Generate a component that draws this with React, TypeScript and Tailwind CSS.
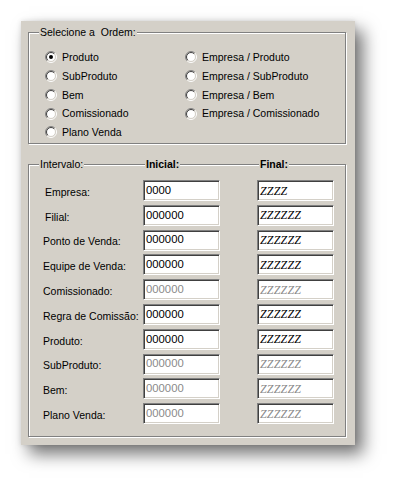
import React from "react";

const FONT = { fontFamily: '"Liberation Sans", Arial, sans-serif' };

function Radio({ checked }: { checked?: boolean }) {
  const c = 6;
  const p = (r: number) => {
    const d = r * 0.7071;
    return { x1: c - d, y1: c + d, x2: c + d, y2: c - d };
  };
  const o = p(5.5);
  const i = p(4.5);
  return (
    <svg width="12" height="12" viewBox="0 0 12 12" className="shrink-0">
      <circle cx="6" cy="6" r="4.5" fill="#fff" />
      <path d={`M ${o.x1} ${o.y1} A 5.5 5.5 0 0 1 ${o.x2} ${o.y2}`} stroke="#808080" strokeWidth="1" fill="none" />
      <path d={`M ${o.x2} ${o.y2} A 5.5 5.5 0 0 1 ${o.x1} ${o.y1}`} stroke="#ffffff" strokeWidth="1" fill="none" />
      <path d={`M ${i.x1} ${i.y1} A 4.5 4.5 0 0 1 ${i.x2} ${i.y2}`} stroke="#404040" strokeWidth="1" fill="none" />
      <path d={`M ${i.x2} ${i.y2} A 4.5 4.5 0 0 1 ${i.x1} ${i.y1}`} stroke="#d4d0c8" strokeWidth="1" fill="none" />
      {checked && <circle cx="6" cy="6" r="2" fill="#000" />}
    </svg>
  );
}

function RadioItem({ label, checked }: { label: string; checked?: boolean }) {
  return (
    <div className="flex h-[18.75px] items-center gap-[5px]">
      <Radio checked={checked} />
      <span className="text-[10.5px] leading-none text-black">{label}</span>
    </div>
  );
}

function Field({ value, disabled, mono }: { value: string; disabled?: boolean; mono?: boolean }) {
  return (
    <div className="flex h-[21px] w-[77px] items-center border border-t-[#808080] border-l-[#808080] border-r-white border-b-white bg-white pl-[2px] shadow-[inset_1px_1px_0_#404040,inset_-1px_-1px_0_#d4d0c8]">
      <span
        className={
          (mono ? "italic text-[12px] tracking-[0.2px] " : "text-[11.3px] ") +
          (disabled ? "text-[#8a8a8a]" : "text-black") +
          " leading-none"
        }
        style={mono ? { fontFamily: '"Liberation Serif", "Times New Roman", serif' } : undefined}
      >
        {value}
      </span>
    </div>
  );
}

const rows = [
  { label: "Empresa:", ini: "0000", fin: "ZZZZ", dis: false, pad: true },
  { label: "Filial:", ini: "000000", fin: "ZZZZZZ", dis: false, pad: true },
  { label: "Ponto de Venda:", ini: "000000", fin: "ZZZZZZ", dis: false },
  { label: "Equipe de Venda:", ini: "000000", fin: "ZZZZZZ", dis: false },
  { label: "Comissionado:", ini: "000000", fin: "ZZZZZZ", dis: true },
  { label: "Regra de Comissão:", ini: "000000", fin: "ZZZZZZ", dis: false },
  { label: "Produto:", ini: "000000", fin: "ZZZZZZ", dis: false },
  { label: "SubProduto:", ini: "000000", fin: "ZZZZZZ", dis: true },
  { label: "Bem:", ini: "000000", fin: "ZZZZZZ", dis: true },
  { label: "Plano Venda:", ini: "000000", fin: "ZZZZZZ", dis: true },
];

export default function App() {
  return (
    <div className="min-h-[487px] w-[397px] bg-white pl-[21px] pt-[21px]" style={FONT}>
      <div className="flex h-[424px] w-[334px] flex-col bg-[#d4d0c8] pl-[7px] pt-[11px] shadow-[8px_9px_16px_rgba(0,0,0,0.55),0_0_5px_rgba(0,0,0,0.12)]">
        {/* Group 1 */}
        <div className="relative h-[112px] w-[318px] border border-[#808080] pl-[16px] pt-[15px] shadow-[inset_1px_1px_0_#fff,1px_1px_0_#fff]">
          <span className="absolute left-[10px] top-[-7px] bg-[#d4d0c8] px-[1px] text-[10.5px] leading-[13px] text-black whitespace-pre">
            Selecione a  Ordem:
          </span>
          <div className="flex">
            <div className="flex w-[140px] flex-col">
              <RadioItem label="Produto" checked />
              <RadioItem label="SubProduto" />
              <RadioItem label="Bem" />
              <RadioItem label="Comissionado" />
              <RadioItem label="Plano Venda" />
            </div>
            <div className="flex flex-col">
              <RadioItem label="Empresa / Produto" />
              <RadioItem label="Empresa / SubProduto" />
              <RadioItem label="Empresa / Bem" />
              <RadioItem label="Empresa / Comissionado" />
            </div>
          </div>
        </div>

        {/* Group 2 */}
        <div className="relative mt-[20px] h-[273px] w-[318px] border border-[#808080] pl-[14px] pt-[15px] shadow-[inset_1px_1px_0_#fff,1px_1px_0_#fff]">
          <div className="absolute left-[10px] top-[-7px] flex text-[10.5px] leading-[13px] text-black">
            <div className="w-[106px]">
              <span className="bg-[#d4d0c8] px-[1px]">Intervalo:</span>
            </div>
            <div className="w-[114px]">
              <span className="bg-[#d4d0c8] px-[1px] font-bold">Inicial:</span>
            </div>
            <div>
              <span className="bg-[#d4d0c8] px-[1px] font-bold">Final:</span>
            </div>
          </div>
          <div className="flex flex-col gap-[3.8px]">
            {rows.map((r) => (
              <div key={r.label} className="flex h-[21px] items-center">
                <div className={"w-[100px] pt-[3px] text-[10.5px] leading-none text-black " + (r.pad ? "pl-[2px]" : "")}>
                  {r.label}
                </div>
                <Field value={r.ini} disabled={r.dis} />
                <div className="w-[37px]" />
                <Field value={r.fin} disabled={r.dis} mono />
              </div>
            ))}
          </div>
        </div>
      </div>
    </div>
  );
}
